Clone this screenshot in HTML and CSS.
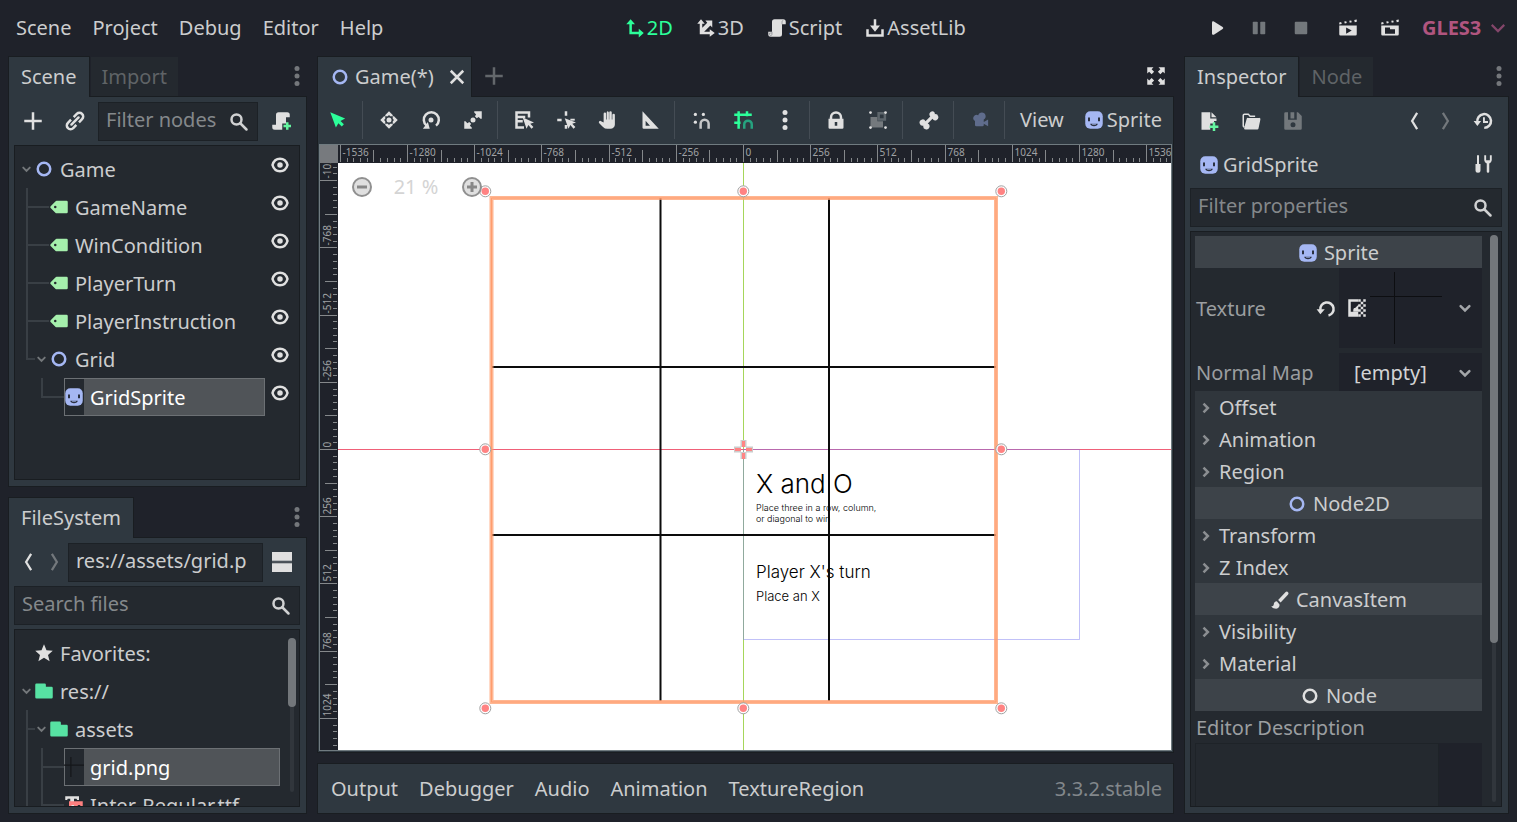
FILE: index.html
```html
<!DOCTYPE html>
<html lang="en">
<head>
<meta charset="utf-8">
<title>Game - Editor</title>
<link rel="stylesheet" href="styles.css">
</head>
<body>
<svg class="defs" aria-hidden="true">
  <symbol id="add" viewBox="0 0 16 16"><path d="M7 1v6H1v2h6v6h2V9h6V7H9V1z"/></symbol>
  <symbol id="link" viewBox="0 0 16 16"><g transform="rotate(-45 8 8)" fill="none" stroke="currentColor" stroke-width="2"><path d="M6.500 5H3a3 3 0 0 0 0 6h3.500"/><path d="M9.500 5H13a3 3 0 0 1 0 6H9.500"/><path d="M4 8h8" stroke-linecap="round"/></g></symbol>
  <symbol id="search" viewBox="0 0 16 16"><circle cx="6" cy="6" r="4" fill="none" stroke="currentColor" stroke-width="2"/><path d="M9 9l5 5" stroke="currentColor" stroke-width="2" stroke-linecap="round"/></symbol>
  <symbol id="script" viewBox="0 0 16 16"><path d="M6 1a2 2 0 0 0-2 2v8H1v2a2 2 0 0 0 2 2h7a2 2 0 0 0 2-2V5h3V3a2 2 0 0 0-2-2z"/><path d="M4 11v2a1 1 0 0 1-2 0v-1h2M12 5V3a1 1 0 0 1 1-1" fill="none" stroke="#8b8f93" stroke-width=".6"/></symbol>
  <symbol id="script-new" viewBox="0 0 16 16"><path d="M6 1a2 2 0 0 0-2 2v8H1v2a2 2 0 0 0 2 2h6v-5h3V5h3V3a2 2 0 0 0-2-2z"/><path d="M12 9v2h-2v2h2v2h2v-2h2v-2h-2V9z" fill="#65f5a0"/></symbol>
  <symbol id="node" viewBox="0 0 16 16"><circle cx="8" cy="8" r="5" fill="none" stroke="currentColor" stroke-width="2"/></symbol>
  <symbol id="label" viewBox="0 0 16 16"><path fill-rule="evenodd" d="M6 3a1 1 0 0 0-.7.300l-4 4a1 1 0 0 0 0 1.400l4 4A1 1 0 0 0 6 13h8a1 1 0 0 0 1-1V4a1 1 0 0 0-1-1zM5 7a1 1 0 1 1 0 2 1 1 0 0 1 0-2z"/></symbol>
  <symbol id="eye" viewBox="0 0 16 16"><path d="M2 8c1-3.500 3.500-5 6-5s5 1.500 6 5c-1 3.500-3.500 5-6 5s-5-1.500-6-5z" fill="none" stroke="currentColor" stroke-width="2"/><circle cx="8" cy="8" r="2.200"/></symbol>
  <symbol id="sprite" viewBox="0 0 16 16"><rect x="1" y="1" width="14" height="14" rx="4" fill="#a5b7f3"/><path d="M3.200 6h1.600v3H3.200zM11.200 6h1.600v3h-1.600z" fill="#2b3140"/><path d="M5 11h6c0 1.200-1.400 2-3 2s-3-.8-3-2z" fill="#2b3140"/><path d="M6.500 11h3v.7h-3z" fill="#a5b7f3"/></symbol>
  <symbol id="dots" viewBox="0 0 16 16"><circle cx="8" cy="2" r="2"/><circle cx="8" cy="8" r="2"/><circle cx="8" cy="14" r="2"/></symbol>
  <symbol id="down" viewBox="0 0 16 16"><path d="M4.500 6.500 8 10l3.500-3.500" fill="none" stroke="currentColor" stroke-width="2" stroke-linecap="round"/></symbol>
  <symbol id="right" viewBox="0 0 16 16"><path d="M6 4.500 9.500 8 6 11.500" fill="none" stroke="currentColor" stroke-width="2"/></symbol>
  <symbol id="back" viewBox="0 0 16 16"><path d="M10.500 1.500 6.500 8l4 6.500" fill="none" stroke="currentColor" stroke-width="1.800"/></symbol>
  <symbol id="forward" viewBox="0 0 16 16"><path d="M5.500 1.500 9.500 8l-4 6.500" fill="none" stroke="currentColor" stroke-width="1.800"/></symbol>
  <symbol id="split" viewBox="0 0 16 16"><path d="M0 0h16v7H0zM0 9h16v7H0z"/><path d="M0 7.300h16v1.300H0z" opacity=".2"/></symbol>
  <symbol id="star" viewBox="0 0 16 16"><path d="M8 1 6 5.800 1 6.200l3.800 3.300L3.500 14.500 8 11.800l4.500 2.700-1.300-5L15 6.200l-5-.4z"/></symbol>
  <symbol id="folder" viewBox="0 0 16 16"><path d="M2 2a1 1 0 0 0-1 1v10a1 1 0 0 0 1 1h12a1 1 0 0 0 1-1V5.500a1 1 0 0 0-1-1H9.500V3a1 1 0 0 0-1-1z"/></symbol>
  <symbol id="font" viewBox="0 0 16 16"><path d="M1 1h11v3h-1.500L10 3H8v8h1v2H4v-2h1V3H3l-.5 1H1z"/><path d="M4 5h11v4h-2V8h-2v5h2v2H7v-2h1V8H6v1H4z" fill="#fc7f7f"/></symbol>
  <symbol id="axes2d" viewBox="0 0 16 16"><path d="M4.500 1 1 5h2.500v8H11v2.500l4-3.500-4-3.500V11H5.500V5H8z"/></symbol>
  <symbol id="axes3d" viewBox="0 0 16 16"><path d="M4 1 1 4.500h2V13h8v2l4-3-4-3v2H6.500l5-5L13 7.500V2H7.500L9 3.700l-4 4V4.500h2z"/></symbol>
  <symbol id="assets" viewBox="0 0 16 16"><path d="M7 1v5H4l4 5 4-5H9V1zM1 9v6h14V9h-2v4H3V9z"/></symbol>
  <symbol id="play" viewBox="0 0 16 16"><path d="M4 3.500v9a1 1 0 0 0 1.500.8l7-4.500a1 1 0 0 0 0-1.600l-7-4.500A1 1 0 0 0 4 3.500z"/></symbol>
  <symbol id="pause" viewBox="0 0 16 16"><rect x="3" y="3" width="4" height="10" rx=".6"/><rect x="9" y="3" width="4" height="10" rx=".6"/></symbol>
  <symbol id="stop" viewBox="0 0 16 16"><rect x="3" y="3" width="10" height="10" rx=".8"/></symbol>
  <symbol id="clap-play" viewBox="0 0 16 16"><path d="m1 3.500 1.500-.3.500 1.500-2 .4zM5 2.800l1.600-.3.400 1.500-1.600.3zM9 2.200l1.600-.3.400 1.500-1.600.3zM13 1.500l2-.3v1.800l-1.600.3z"/><path fill-rule="evenodd" d="M1 6h14v7a1 1 0 0 1-1 1H2a1 1 0 0 1-1-1zm5.500 1.500v5l4.500-2.500z"/></symbol>
  <symbol id="clap-file" viewBox="0 0 16 16"><path d="m1 3.500 1.500-.3.500 1.500-2 .4zM5 2.800l1.600-.3.400 1.500-1.600.3zM9 2.200l1.600-.3.400 1.500-1.600.3zM13 1.500l2-.3v1.800l-1.600.3z"/><path fill-rule="evenodd" d="M1 6h14v7a1 1 0 0 1-1 1H2a1 1 0 0 1-1-1zm3 2v4.500h8V9H8V7.500H4z"/></symbol>
  <symbol id="chevron" viewBox="0 0 16 16"><path d="M3 5.500 8 10.500l5-5" fill="none" stroke="currentColor" stroke-width="1.700"/></symbol>
  <symbol id="close" viewBox="0 0 16 16"><path d="M3 3l10 10M13 3 3 13" fill="none" stroke="currentColor" stroke-width="2"/></symbol>
  <symbol id="expand" viewBox="0 0 16 16"><path d="M1 1h5L4.500 2.500l2 2-2 2-2-2L1 6zM15 1v5l-1.500-1.500-2 2-2-2 2-2L10 1zM1 15v-5l1.500 1.500 2-2 2 2-2 2L6 15zM15 15h-5l1.500-1.500-2-2 2-2 2 2L15 10z"/></symbol>
  <symbol id="select" viewBox="0 0 16 16"><path d="M1.800 1.800 6.300 14l2-3.500 2.700 2.600 1.700-1.700L10 8.700l3.700-2z"/></symbol>
  <symbol id="move" viewBox="0 0 16 16"><circle cx="8" cy="8" r="2"/><path d="M8 1 5 4v1h2l1-1 1 1h2V4zM8 15l3-3v-1H9l-1 1-1-1H5v1zM1 8l3 3h1V9L4 8l1-1V5H4zM15 8l-3-3h-1v2l1 1-1 1v2h1z"/></symbol>
  <symbol id="rotate" viewBox="0 0 16 16"><circle cx="8" cy="8" r="2"/><path d="M4.500 12.500A6 6 0 1 1 12 12.500" fill="none" stroke="currentColor" stroke-width="2"/><path d="M5.500 9.500 7 15H1.500z"/></symbol>
  <symbol id="scale" viewBox="0 0 16 16"><circle cx="8" cy="8" r="2"/><path d="M9 1h6v6h-1l-1.500-1.500-1.500 1-1.500-1.500 1-1.500L9 2zM1 9h1l1.500 1.500 1.500-1 1.500 1.500-1 1.500L7 14v1H1z"/></symbol>
  <symbol id="list-select" viewBox="0 0 16 16"><path fill-rule="evenodd" d="M1 1h12v5h-2V3H3v1.500h6v2H3V8h4v2H3v3h5v2H1z"/><path d="m7 6 3 9 1.500-3 2.500 3 1.500-1.500L13 11l3-1z"/></symbol>
  <symbol id="pivot" viewBox="0 0 16 16"><path d="M7 1h2v3.500H7zM1 7h3.500v2H1zM7 12h2v3H7zM7 6.500l3 8.500 1.500-3 2.500 3 1.500-1.500L13 11l3-1z"/><path d="M11.500 7H15v1.500h-3.500z"/></symbol>
  <symbol id="pan" viewBox="0 0 16 16"><path d="M8 1a1 1 0 0 0-1 1v5.500h-.5V3a1 1 0 0 0-2 0v7L2.500 9a1 1 0 0 0-1.500 1.500l3 3A5 5 0 0 0 7.500 15H10a3.500 3.500 0 0 0 3.500-3.500V4a1 1 0 0 0-2 0v3.500H11V2a1 1 0 0 0-2 0v5.500h-.3V2z"/></symbol>
  <symbol id="ruler" viewBox="0 0 16 16"><path fill-rule="evenodd" d="M2 1v13a1 1 0 0 0 1 1h12zm2.500 7.500L8 12.500H4.500z"/></symbol>
  <symbol id="snap" viewBox="0 0 16 16"><circle cx="3.500" cy="3.500" r="1.300"/><circle cx="9.900" cy="3.500" r="1.300"/><circle cx="3.500" cy="9.700" r="1.300"/><path d="M7.700 15v-4a3.200 3.200 0 0 1 6.400 0v4" fill="none" stroke="currentColor" stroke-width="2" opacity=".85"/></symbol>
  <symbol id="snap-grid" viewBox="0 0 16 16"><path d="M4.500 1v14M11.200 1v4M1 3.700h14M1 10.200h5" fill="none" stroke="currentColor" stroke-width="2"/><path d="M9 15v-3.500a3 3 0 0 1 6 0V15" fill="none" stroke="#26a27f" stroke-width="2"/></symbol>
  <symbol id="lock" viewBox="0 0 16 16"><path fill-rule="evenodd" d="M8 1a5 5 0 0 0-5 5v1H2v7a1 1 0 0 0 1 1h10a1 1 0 0 0 1-1V7h-1V6a5 5 0 0 0-5-5zm0 2a3 3 0 0 1 3 3v1H5V6a3 3 0 0 1 3-3zM7 9.500h2v3H7z"/></symbol>
  <symbol id="group" viewBox="0 0 16 16"><path d="M2 5.500h5.500V9H12v5H2z" fill="#74797d"/><path fill-rule="evenodd" d="M7.500 1.500h7v7h-7zm2 2v3h3v-3z" fill="#5e666c"/><circle cx="2" cy="2" r="1.100"/><circle cx="14" cy="2" r="1.100"/><circle cx="2" cy="14" r="1.100"/><circle cx="14" cy="14" r="1.100"/></symbol>
  <symbol id="bone" viewBox="0 0 16 16"><path d="M10.500 1a2.500 2.500 0 0 0-1.500 4.200L5.200 9A2.500 2.500 0 1 0 3.500 12.500 2.500 2.500 0 1 0 7 10.800L10.800 7A2.500 2.500 0 1 0 12.700 3.300 2.300 2.300 0 0 0 10.500 1z"/></symbol>
  <symbol id="camera" viewBox="0 0 16 16"><path d="M9.500 2A3 3 0 0 0 6.600 4.200 2.500 2.500 0 1 0 4 8.800V12a1 1 0 0 0 1 1h5a1 1 0 0 0 1-1v-1l3.500 2V7.500L11 9.500V7.600A3 3 0 0 0 9.500 2z"/></symbol>
  <symbol id="file-new" viewBox="0 0 16 16"><path d="M2 1v14h7v-5h3V8h2V6H9V1zM10 1v4h4z"/><path d="M11 9v2.500H8.500v2H11V16h2v-2.500h2.500v-2H13V9z" fill="#65f5a0"/></symbol>
  <symbol id="folder-open" viewBox="0 0 16 16"><path d="M2.500 13 1.800 12V3.500a1 1 0 0 1 1-1h3l1.500 1.700h4" fill="none" stroke="currentColor" stroke-width="1.200"/><path d="M5.500 5.500h9a1 1 0 0 1 1 1.200L14 14a1 1 0 0 1-1 .8H3.500a1 1 0 0 1-1-1.200l2-7.300a1 1 0 0 1 1-.8z"/></symbol>
  <symbol id="save" viewBox="0 0 16 16"><path fill-rule="evenodd" d="M2 1a1 1 0 0 0-1 1v12a1 1 0 0 0 1 1h12a1 1 0 0 0 1-1V4l-3-3h-1v6H4V1zm4 0h3v5H6zM8 9a2 2 0 1 1 0 4 2 2 0 0 1 0-4z"/></symbol>
  <symbol id="history" viewBox="0 0 16 16"><path d="M3.500 9A5.500 5.500 0 1 1 9 13.500" fill="none" stroke="currentColor" stroke-width="2"/><path d="M.5 8h6l-3 4zM8 5h1.500v3H12v1.500H8z"/></symbol>
  <symbol id="tools" viewBox="0 0 16 16"><path d="M3.200 1h1.600v7H3.200zM2 8h4v5a2 2 0 0 1-4 0z"/><path d="M9 1v4a3 3 0 0 0 2 2.500V14a1 1 0 0 0 2 0V7.500A3 3 0 0 0 15 5V1h-1.500v4h-3V1z"/></symbol>
  <symbol id="brush" viewBox="0 0 16 16"><path d="M14 1.300a1.400 1.400 0 0 0-1.500.2L6.500 8 8.500 10l6-6.500A1.500 1.500 0 0 0 14 1.300zM5.500 9A2.700 2.700 0 0 0 3 11.500c0 1-1 1.500-2 1.500 1 1.500 2.500 2 4 2a3 3 0 0 0 2.600-3.500z"/></symbol>
  <symbol id="undo" viewBox="0 0 16 16"><path d="M3.500 9.500A5.300 5.300 0 1 1 10 14" fill="none" stroke="currentColor" stroke-width="2"/><path d="M.5 9h6.500L3.500 13z"/></symbol>
  <symbol id="texture" viewBox="0 0 16 16"><path fill-rule="evenodd" d="M1 1h8v2H3v8h6v4H1z"/><path d="M5 10c0-2 1-2 1.500-2L9 5.500V11H5zM9 1h2v2H9zM13 1h2v2h-2zM11 3h2v2h-2zM9 5h2v2H9zM13 5h2v2h-2zM11 7h2v2h-2zM9 9h2v2H9zM13 9h2v2h-2zM11 11h2v2h-2zM9 13h2v2H9zM13 13h2v2h-2z"/></symbol>
  <symbol id="grid-thumb" viewBox="0 0 16 16"><path d="M0 6.500h16M5.500 0v16" stroke="#14171b" stroke-width="1"/></symbol>
</svg>

<header class="topbar">
  <nav class="menus" aria-label="Main menu">
    <button>Scene</button><button>Project</button><button>Debug</button><button>Editor</button><button>Help</button>
  </nav>
  <nav class="modes" aria-label="Workspaces">
    <button class="active"><svg class="icon"><use href="#axes2d"/></svg>2D</button>
    <button><svg class="icon"><use href="#axes3d"/></svg>3D</button>
    <button><svg class="icon"><use href="#script"/></svg>Script</button>
    <button><svg class="icon"><use href="#assets"/></svg>AssetLib</button>
  </nav>
  <div class="run">
    <button class="tool" aria-label="Play"><svg class="icon"><use href="#play"/></svg></button>
    <button class="tool off" aria-label="Pause"><svg class="icon"><use href="#pause"/></svg></button>
    <button class="tool off" aria-label="Stop"><svg class="icon"><use href="#stop"/></svg></button>
    <button class="tool scene-run" aria-label="Play scene"><svg class="icon"><use href="#clap-play"/></svg></button>
    <button class="tool" aria-label="Play custom scene"><svg class="icon"><use href="#clap-file"/></svg></button>
    <label class="renderer"><select aria-label="Renderer"><option>GLES3</option></select><svg class="icon"><use href="#chevron"/></svg></label>
  </div>
</header>

<main class="workspace">
  <div class="column">
    <section class="dock dock-scene">
      <div class="tabs">
        <button class="tab current">Scene</button><button class="tab">Import</button>
        <button class="tab-menu" aria-label="Dock options"><svg class="icon"><use href="#dots"/></svg></button>
      </div>
      <div class="panel">
        <div class="row">
          <button class="tool" aria-label="Add node"><svg class="icon"><use href="#add"/></svg></button>
          <button class="tool" aria-label="Instance scene"><svg class="icon"><use href="#link"/></svg></button>
          <label class="field"><input type="text" placeholder="Filter nodes" aria-label="Filter nodes"><svg class="icon"><use href="#search"/></svg></label>
          <button class="tool" aria-label="Attach script"><svg class="icon"><use href="#script-new"/></svg></button>
        </div>
        <div class="tree">
          <ul class="branch root">
            <li>
              <div class="item"><svg class="icon caret"><use href="#down"/></svg><span class="cell"><span class="thumb blue"><svg class="icon"><use href="#node"/></svg></span><span class="name">Game</span></span><button class="eye" aria-label="Toggle visibility"><svg class="icon"><use href="#eye"/></svg></button></div>
              <ul class="branch">
                <li><div class="item leaf"><span class="cell"><span class="thumb green"><svg class="icon"><use href="#label"/></svg></span><span class="name">GameName</span></span><button class="eye" aria-label="Toggle visibility"><svg class="icon"><use href="#eye"/></svg></button></div></li>
                <li><div class="item leaf"><span class="cell"><span class="thumb green"><svg class="icon"><use href="#label"/></svg></span><span class="name">WinCondition</span></span><button class="eye" aria-label="Toggle visibility"><svg class="icon"><use href="#eye"/></svg></button></div></li>
                <li><div class="item leaf"><span class="cell"><span class="thumb green"><svg class="icon"><use href="#label"/></svg></span><span class="name">PlayerTurn</span></span><button class="eye" aria-label="Toggle visibility"><svg class="icon"><use href="#eye"/></svg></button></div></li>
                <li><div class="item leaf"><span class="cell"><span class="thumb green"><svg class="icon"><use href="#label"/></svg></span><span class="name">PlayerInstruction</span></span><button class="eye" aria-label="Toggle visibility"><svg class="icon"><use href="#eye"/></svg></button></div></li>
                <li>
                  <div class="item"><svg class="icon caret"><use href="#down"/></svg><span class="cell"><span class="thumb blue"><svg class="icon"><use href="#node"/></svg></span><span class="name">Grid</span></span><button class="eye" aria-label="Toggle visibility"><svg class="icon"><use href="#eye"/></svg></button></div>
                  <ul class="branch">
                    <li><div class="item leaf"><span class="cell selected"><span class="thumb"><svg class="icon"><use href="#sprite"/></svg></span><span class="name">GridSprite</span></span><button class="eye" aria-label="Toggle visibility"><svg class="icon"><use href="#eye"/></svg></button></div></li>
                  </ul>
                </li>
              </ul>
            </li>
          </ul>
        </div>
      </div>
    </section>

    <section class="dock dock-files">
      <div class="tabs">
        <button class="tab current">FileSystem</button>
        <button class="tab-menu" aria-label="Dock options"><svg class="icon"><use href="#dots"/></svg></button>
      </div>
      <div class="panel">
        <div class="row files-row">
          <button class="step" aria-label="Back"><svg class="icon"><use href="#back"/></svg></button>
          <button class="step off" aria-label="Forward"><svg class="icon"><use href="#forward"/></svg></button>
          <label class="field"><input type="text" value="res://assets/grid.p" aria-label="Path"></label>
          <button class="tool" aria-label="Toggle split mode"><svg class="icon"><use href="#split"/></svg></button>
        </div>
        <label class="field"><input type="text" placeholder="Search files" aria-label="Search files"><svg class="icon"><use href="#search"/></svg></label>
        <div class="tree scrolling">
          <ul class="branch root">
            <li><div class="item"><span class="caret"></span><span class="cell"><span class="thumb"><svg class="icon"><use href="#star"/></svg></span><span class="name">Favorites:</span></span></div></li>
            <li>
              <div class="item"><svg class="icon caret"><use href="#down"/></svg><span class="cell"><span class="thumb mint"><svg class="icon"><use href="#folder"/></svg></span><span class="name">res://</span></span></div>
              <ul class="branch open">
                <li>
                  <div class="item"><svg class="icon caret"><use href="#down"/></svg><span class="cell"><span class="thumb mint"><svg class="icon"><use href="#folder"/></svg></span><span class="name">assets</span></span></div>
                  <ul class="branch open">
                    <li><div class="item leaf"><span class="cell selected"><span class="thumb"><svg class="icon"><use href="#grid-thumb"/></svg></span><span class="name">grid.png</span></span></div></li>
                    <li><div class="item leaf"><span class="cell"><span class="thumb"><svg class="icon"><use href="#font"/></svg></span><span class="name">Inter-Regular.ttf</span></span></div></li>
                  </ul>
                </li>
              </ul>
            </li>
          </ul>
          <div class="scrollbar"><span class="grip files-grip"></span></div>
        </div>
      </div>
    </section>
  </div>

  <div class="column">
    <section class="dock dock-main">
      <div class="tabs">
        <div class="tab current scene-tab"><svg class="icon blue"><use href="#node"/></svg><span>Game(*)</span><button class="close" aria-label="Close tab"><svg class="icon"><use href="#close"/></svg></button></div>
        <button class="add-tab" aria-label="Add scene"><svg class="icon"><use href="#add"/></svg></button>
        <button class="expand" aria-label="Distraction free mode"><svg class="icon"><use href="#expand"/></svg></button>
      </div>
      <div class="panel editor">
        <div class="toolbar">
          <button class="tool active" aria-label="Select"><svg class="icon"><use href="#select"/></svg></button>
          <i class="sep"></i>
          <button class="tool" aria-label="Move"><svg class="icon"><use href="#move"/></svg></button>
          <button class="tool" aria-label="Rotate"><svg class="icon"><use href="#rotate"/></svg></button>
          <button class="tool" aria-label="Scale"><svg class="icon"><use href="#scale"/></svg></button>
          <i class="sep"></i>
          <button class="tool" aria-label="List select"><svg class="icon"><use href="#list-select"/></svg></button>
          <button class="tool" aria-label="Pivot"><svg class="icon"><use href="#pivot"/></svg></button>
          <button class="tool" aria-label="Pan"><svg class="icon"><use href="#pan"/></svg></button>
          <button class="tool" aria-label="Ruler"><svg class="icon"><use href="#ruler"/></svg></button>
          <i class="sep"></i>
          <button class="tool" aria-label="Smart snap"><svg class="icon"><use href="#snap"/></svg></button>
          <button class="tool active" aria-label="Grid snap"><svg class="icon"><use href="#snap-grid"/></svg></button>
          <button class="tool" aria-label="Snap options"><svg class="icon"><use href="#dots"/></svg></button>
          <i class="sep"></i>
          <button class="tool" aria-label="Lock"><svg class="icon"><use href="#lock"/></svg></button>
          <button class="tool" aria-label="Group"><svg class="icon"><use href="#group"/></svg></button>
          <i class="sep"></i>
          <button class="tool" aria-label="Skeleton"><svg class="icon"><use href="#bone"/></svg></button>
          <i class="sep"></i>
          <button class="tool camera" aria-label="Camera override"><svg class="icon"><use href="#camera"/></svg></button>
          <i class="sep"></i>
          <button class="text-button">View</button>
          <button class="text-button"><svg class="icon"><use href="#sprite"/></svg>Sprite</button>
        </div>
        <div class="viewport">
          <div class="corner"></div>
          <svg class="ruler ruler-x" id="ruler-x"></svg>
          <svg class="ruler ruler-y" id="ruler-y"></svg>
          <div class="canvas">
            <svg class="scene">
              <path class="axis-y" d="M405.500 0v1200"/>
              <path class="axis-x" d="M0 286.500h2400"/>
              <path class="bounds" d="M405.500 286.500h336v190h-336z"/>
              <g class="world">
                <text x="418" y="330" class="title">X and O</text>
                <text x="418" y="348" class="hint">Place three in a row, column,</text>
                <text x="418" y="359" class="hint">or diagonal to win</text>
                <text x="418" y="415" class="turn">Player X's turn</text>
                <text x="418" y="438" class="step-text">Place an X</text>
                <path d="M322.500 35v503M491 35v503M153 204h505M153 372h505"/>
              </g>
              <path class="outline-glow" d="M153.500 35h504.500v504h-504.500z"/>
              <path class="outline" d="M153.500 35h504.500v504h-504.500z"/>
              <g id="handles"></g>
              <g class="cross"><path class="cross-rim" d="M405.500 277v7M405.500 289v7M396 286.500h7M408 286.500h7"/><path class="cross-core" d="M405.500 278v6M405.500 290v6M397 286.500h6M408 286.500h6"/></g>
            </svg>
            <div class="zoom">
              <button aria-label="Zoom out"><svg viewBox="0 0 20 20"><circle cx="10" cy="10" r="9"/><path d="M5 10h10"/></svg></button>
              <button class="percent">21 %</button>
              <button aria-label="Zoom in"><svg viewBox="0 0 20 20"><circle cx="10" cy="10" r="9"/><path d="M5 10h10M10 5v10"/></svg></button>
            </div>
          </div>
        </div>
      </div>
    </section>
    <footer class="bottom">
      <button>Output</button><button>Debugger</button><button>Audio</button><button>Animation</button><button>TextureRegion</button>
      <span class="version">3.3.2.stable</span>
    </footer>
  </div>

  <section class="dock">
    <div class="tabs">
      <button class="tab current">Inspector</button><button class="tab">Node</button>
      <button class="tab-menu" aria-label="Dock options"><svg class="icon"><use href="#dots"/></svg></button>
    </div>
    <div class="panel">
      <div class="row">
        <button class="tool" aria-label="New resource"><svg class="icon"><use href="#file-new"/></svg></button>
        <button class="tool" aria-label="Open resource"><svg class="icon"><use href="#folder-open"/></svg></button>
        <button class="tool off" aria-label="Save resource"><svg class="icon"><use href="#save"/></svg></button>
        <button class="step push" aria-label="Back"><svg class="icon"><use href="#back"/></svg></button>
        <button class="step off" aria-label="Forward"><svg class="icon"><use href="#forward"/></svg></button>
        <button class="tool" aria-label="History"><svg class="icon"><use href="#history"/></svg></button>
      </div>
      <div class="row">
        <button class="object"><svg class="icon"><use href="#sprite"/></svg>GridSprite</button>
        <button class="tool push" aria-label="Object tools"><svg class="icon"><use href="#tools"/></svg></button>
      </div>
      <label class="field"><input type="text" placeholder="Filter properties" aria-label="Filter properties"><svg class="icon"><use href="#search"/></svg></label>
      <div class="properties">
        <div class="list">
          <h2 class="category"><svg class="icon"><use href="#sprite"/></svg>Sprite</h2>
          <div class="property texture"><span>Texture</span><button class="revert" aria-label="Revert"><svg class="icon"><use href="#undo"/></svg></button>
            <button class="value" aria-label="Texture value"><svg class="icon"><use href="#texture"/></svg><svg class="preview" viewBox="0 0 72 72"><path d="M24.500 0v72M0 24.500h72"/></svg><svg class="icon arrow"><use href="#down"/></svg></button></div>
          <div class="property normal"><span>Normal Map</span><button class="value">[empty]<svg class="icon arrow"><use href="#down"/></svg></button></div>
          <button class="fold"><svg class="icon"><use href="#right"/></svg>Offset</button>
          <button class="fold"><svg class="icon"><use href="#right"/></svg>Animation</button>
          <button class="fold"><svg class="icon"><use href="#right"/></svg>Region</button>
          <h2 class="category"><svg class="icon blue"><use href="#node"/></svg>Node2D</h2>
          <button class="fold"><svg class="icon"><use href="#right"/></svg>Transform</button>
          <button class="fold"><svg class="icon"><use href="#right"/></svg>Z Index</button>
          <h2 class="category"><svg class="icon"><use href="#brush"/></svg>CanvasItem</h2>
          <button class="fold"><svg class="icon"><use href="#right"/></svg>Visibility</button>
          <button class="fold"><svg class="icon"><use href="#right"/></svg>Material</button>
          <h2 class="category"><svg class="icon"><use href="#node"/></svg>Node</h2>
          <label class="description" for="description">Editor Description</label>
          <div class="description-box"><textarea id="description"></textarea></div>
        </div>
        <div class="scrollbar"><span class="grip props-grip"></span></div>
      </div>
    </div>
  </section>
</main>
<script src="script.js"></script>
</body>
</html>
```
FILE: styles.css
```css
* { box-sizing: border-box; }

:root {
  --base: #1f222a;
  --panel: #2f3840;
  --inner: #24292f;
  --edge: #191d21;
  --text: #cccdce;
  --muted: #84888b;
  --icon: #e0e0e0;
  --blue: #a5b7f3;
  --accent: #2cff9a;
}

html, body { height: 100%; }

body {
  margin: 0;
  display: flex;
  flex-direction: column;
  background: var(--base);
  color: var(--text);
  font: 20px/28px "Noto Sans", sans-serif;
  overflow: hidden;
}

button, input, select, textarea {
  font: inherit;
  color: inherit;
  background: none;
  border: 0;
  padding: 0;
  margin: 0;
  outline: 0;
}

button { display: flex; align-items: center; justify-content: center; white-space: nowrap; }
ul { list-style: none; margin: 0; padding: 0; }
h2 { margin: 0; font: inherit; }

.defs { position: absolute; width: 0; height: 0; }
.icon { width: 20px; height: 20px; flex: none; fill: currentColor; color: var(--icon); }
.blue, .blue .icon { color: var(--blue); }
.green .icon { color: #a5efac; }
.mint .icon { color: #57e2a3; }
.off .icon { color: #73787c; }
.active, .active .icon { color: var(--accent); }
.tool { width: 38px; height: 38px; flex: none; }
.step { width: 28px; height: 38px; flex: none; }
.push { margin-left: auto; }

/* Top bar */
.topbar {
  height: 56px;
  flex: none;
  display: flex;
  align-items: center;
  justify-content: space-between;
  padding: 0 9px 0 7px;
}
.menus, .modes, .run { display: flex; align-items: center; }
.menus { gap: 3px; }
.modes { gap: 5px; }
.run { gap: 4px; }
.menus button, .modes button { padding: 0 9px; }
.modes button { gap: 2px; }
.scene-run { margin-left: 5px; }
.renderer { display: flex; align-items: center; gap: 6px; padding-left: 9px; }
.renderer select { appearance: none; color: #b0557f; font-weight: 700; }
.renderer .icon { color: #83466a; }

/* Columns and docks */
.workspace {
  flex: 1;
  min-height: 0;
  display: grid;
  grid-template-columns: 299px minmax(0, 1fr) 325px;
  gap: 10px;
  padding: 0 8px 8px;
}
.column { display: flex; flex-direction: column; gap: 10px; min-height: 0; }
.dock { display: flex; flex-direction: column; min-height: 0; }
.dock-scene { flex: 431 1 0; }
.dock-files { flex: 317 1 0; }
.dock-main { flex: 1; }

.tabs { display: flex; height: 40px; flex: none; }
.tab {
  height: 39px;
  margin: 1px 0 0 1px;
  padding: 0 11px;
  background: var(--inner);
  color: #5f6366;
}
.tab.current {
  height: 41px;
  margin: 0;
  padding: 0 12px;
  border: 1px solid var(--edge);
  border-bottom: 0;
  background: var(--panel);
  color: var(--text);
  z-index: 1;
}
.tab-menu { width: 20px; margin-left: auto; }
.tab-menu .icon { color: #74777b; }

.panel {
  flex: 1;
  min-height: 0;
  display: flex;
  flex-direction: column;
  gap: 4px;
  padding: 5px 6px 6px 5px;
  border: 1px solid var(--edge);
  background: var(--panel);
}
.row { display: flex; align-items: center; gap: 4px; height: 39px; flex: none; }
.row .tool, .row .step { padding-bottom: 1px; }
.files-row { gap: 0; }
.files-row .step { width: 27px; }
.files-row .tool { width: 37px; }
.field {
  flex: 1;
  min-width: 0;
  display: flex;
  align-items: center;
  height: 39px;
  padding: 0 8px 0 7px;
  border: 1px solid #1c2126;
  background: var(--inner);
}
.panel > .field { flex: none; }
.field input { flex: 1; min-width: 0; width: 0; height: 35px; padding-bottom: 4px; }
.field input::placeholder { color: var(--muted); opacity: 1; }
.field .icon { color: #d0d1d2; }

/* Trees */
.tree {
  position: relative;
  flex: 1;
  min-height: 0;
  overflow: hidden;
  padding: 4px 9px 0 4px;
  border: 1px solid var(--edge);
  background: var(--inner);
}
.tree.scrolling { padding-right: 19px; }
.branch .branch { margin-left: 15px; }
.branch li { position: relative; }
.item { display: flex; align-items: center; height: 38px; }
.item.leaf { padding-left: 15px; }
.caret.icon, .caret { width: 15px; flex: none; }
.caret.icon { color: #74787b; }
.cell { flex: 1; display: flex; height: 38px; align-items: center; border: 1px solid transparent; }
.thumb { width: 19px; height: 36px; display: flex; align-items: center; justify-content: flex-end; }
.name { padding-left: 6px; flex: 1; height: 36px; line-height: 37px; white-space: nowrap; }
.selected { border-color: #6c7074; }
.selected .name { background: #505458; color: #fff; }
.eye { width: 20px; height: 28px; margin: 0 0 8px 5px; }
.branch .branch > li::before {
  content: "";
  position: absolute;
  left: -8px;
  top: 0;
  width: 2px;
  height: 100%;
  background: #393f45;
}
.branch .branch:not(.open) > li:last-child::before { height: 20px; }
.branch .branch > li::after {
  content: "";
  position: absolute;
  left: -6px;
  top: 18px;
  width: 7px;
  height: 2px;
  background: #393f45;
}
.branch .branch > li:has(> .leaf)::after { width: 21px; }

.scrollbar {
  position: absolute;
  top: 8px;
  right: 5px;
  bottom: 14px;
  width: 4px;
  border-radius: 2px;
  background: #31363c;
}
.grip {
  position: absolute;
  left: -2px;
  top: 0;
  width: 8px;
  border-radius: 4px;
  background: #73777b;
}
.files-grip { height: 45%; }
.props-grip { height: 72%; }

/* Scene editor */
.scene-tab { display: flex; align-items: center; gap: 5px; }
.tab.scene-tab { padding: 0 4px 0 12px; }
.scene-tab .close { margin-left: 8px; }
.add-tab { width: 44px; }
.add-tab .icon { color: #63676b; }
.expand { width: 36px; margin-left: auto; }
.panel.editor { padding: 0 1px 1px; gap: 0; }
.toolbar { display: flex; align-items: center; gap: 4px; height: 47px; flex: none; padding-bottom: 1px; }
.sep { width: 1px; height: 38px; margin: 0 3px 0 1px; flex: none; background: #444c54; }
.camera .icon { color: #5f6c8c; }
.text-button { padding: 0 8px; gap: 3px; }

.viewport {
  flex: 1;
  min-height: 0;
  display: grid;
  grid-template: 18px minmax(0, 1fr) / 18px minmax(0, 1fr);
  border: 1px solid #707b80;
}
.corner { background: #777a7e; }
.ruler { width: 100%; height: 100%; background: var(--base); overflow: hidden; display: block; }
.ruler path { stroke: #85888b; fill: none; }
.ruler text { font-size: 10px; fill: #a0a2a5; }
.canvas { position: relative; background: #fff; overflow: hidden; }
.scene { display: block; width: 100%; height: 100%; fill: none; }
.axis-y { stroke: #a6d65a; }
.axis-x { stroke: #f06078; }
.bounds { stroke: #7676f0; stroke-opacity: .45; }
.world { font-family: Inter, sans-serif; font-weight: 300; }
.world text { fill: #000; }
.world path { stroke: #0c0c0c; stroke-width: 2; }
.title { font-size: 26px; }
.hint { font-size: 9px; }
.turn { font-size: 17px; }
.step-text { font-size: 13px; }
.outline-glow { stroke: #ff9d6e; stroke-width: 4; stroke-opacity: .75; }
.outline { stroke: #ff9d6e; stroke-width: 1; }
.handle-rim { fill: #fff; stroke: #a0a0a0; stroke-width: 1; }
.handle-core { fill: #ff8383; }
.cross-rim { stroke: #ccc; stroke-width: 6; }
.cross-core { stroke: #ff8585; stroke-width: 3; }

.zoom {
  position: absolute;
  left: 14px;
  top: 10px;
  display: flex;
  align-items: center;
}
.zoom svg { width: 20px; height: 20px; fill: #e0e0e0; stroke: #909090; stroke-width: 2; }
.zoom path { stroke-width: 3; stroke: #888; }
.zoom .percent { width: 90px; padding-right: 2px; color: #d4d4d4; }

.bottom {
  height: 51px;
  flex: none;
  display: flex;
  align-items: center;
  gap: 21px;
  padding: 0 11px 0 13px;
  border: 1px solid var(--edge);
  background: var(--panel);
}
.version { margin-left: auto; color: #82878b; }

/* Inspector */
.object { gap: 4px; padding-left: 9px; }
.properties {
  position: relative;
  flex: 1;
  min-height: 0;
  overflow: hidden;
  padding: 4px 19px 0 4px;
  border: 1px solid var(--edge);
  background: var(--inner);
}
.properties .scrollbar { top: 3px; bottom: 4px; }
.list { display: flex; flex-direction: column; height: 100%; }
.category {
  display: flex;
  align-items: center;
  justify-content: center;
  gap: 6px;
  height: 32px;
  padding-top: 1px;
  flex: none;
  background: #3d4349;
}
.fold {
  height: 32px;
  flex: none;
  justify-content: flex-start;
  gap: 3px;
  padding: 1px 0 0 1px;
  background: #30363c;
}
.fold .icon { color: #8b8e91; }
.property {
  flex: none;
  display: grid;
  grid-template-columns: 1fr auto 143px;
  align-items: center;
  padding-left: 1px;
  color: #9b9ea0;
}
.property span { padding-top: 1px; }
.normal { grid-template-columns: 1fr 143px; margin-top: 5px; height: 38px; }
.texture { height: 80px; }
.revert { padding-right: 3px; }
.value { height: 100%; justify-content: flex-start; background: var(--base); color: #d2d3d4; }
.texture .value { padding-left: 8px; }
.normal .value { padding: 2px 0 0 15px; }
.preview { width: 72px; height: 72px; margin-left: 3px; stroke: #0d0e11; }
.value .arrow { margin: 0 7px 0 auto; color: #a3a6a9; }
.description { height: 32px; flex: none; padding-left: 1px; line-height: 34px; color: #9b9ea0; }
.description-box { flex: 1; min-height: 0; display: flex; padding-right: 43px; background: var(--base); }
.description-box textarea { flex: 1; min-width: 0; resize: none; border: 1px solid #1e2328; border-bottom: 0; background: var(--inner); }
```
FILE: script.js
```javascript
const NS = "http://www.w3.org/2000/svg";
const ORIGIN_X = 405;
const ORIGIN_Y = 286;
const STEP = 6.72;

function node(parent, name, attributes, text) {
  const el = document.createElementNS(NS, name);
  for (const key in attributes) el.setAttribute(key, attributes[key]);
  if (text !== undefined) el.textContent = text;
  parent.appendChild(el);
}

function drawRuler(id, origin, horizontal) {
  const svg = document.getElementById(id);
  const box = svg.getBoundingClientRect();
  const length = horizontal ? box.width : box.height;
  const first = -Math.ceil(origin / STEP);
  let ticks = "";
  for (let i = first; origin + i * STEP < length + (horizontal ? 0 : 20); i++) {
    const at = Math.round(origin + i * STEP) + 0.5;
    const start = i % 10 === 0 ? 0 : i % 5 === 0 ? 5 : 13;
    ticks += horizontal ? `M${at} ${start}V17` : `M${start} ${at}H17`;
    if (i % 10 === 0) {
      const label = String(i * 25.6);
      node(svg, "text", horizontal
        ? { x: at + 2, y: 11 }
        : { transform: `translate(11 ${at - 2}) rotate(-90)` }, label);
    }
  }
  node(svg, "path", { d: ticks });
}

drawRuler("ruler-x", ORIGIN_X, true);
drawRuler("ruler-y", ORIGIN_Y, false);

const handles = document.getElementById("handles");
for (const x of [147, 405, 663]) {
  for (const y of [28, 286, 545]) {
    if (x === 405 && y === 286) continue;
    node(handles, "circle", { class: "handle-rim", cx: x + 0.3, cy: y + 0.3, r: 5.5 });
    node(handles, "circle", { class: "handle-core", cx: x + 0.3, cy: y + 0.3, r: 3.7 });
  }
}
```
